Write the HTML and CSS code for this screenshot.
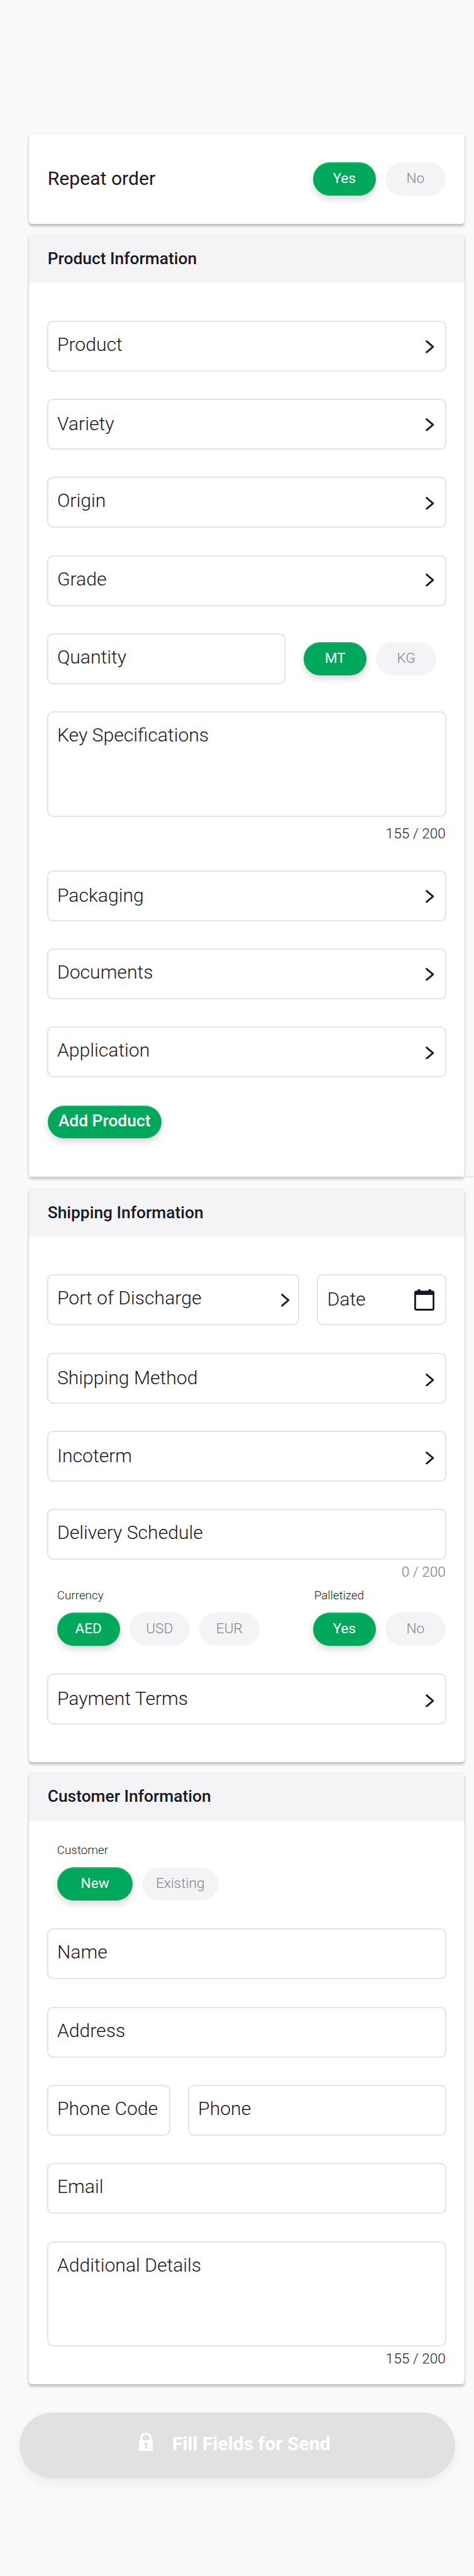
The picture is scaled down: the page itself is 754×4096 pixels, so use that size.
FILE: index.html
```html
<!DOCTYPE html>
<html lang="en">
<head>
<meta charset="utf-8">
<title>Order form</title>
<link rel="stylesheet" href="styles.css">
</head>
<body>
<svg class="sprite" aria-hidden="true">
  <symbol id="chevron" viewBox="0 0 15 22"><path d="M1.7 1.7 L12.6 11 L1.7 20.3" fill="none" stroke="currentColor" stroke-width="3" stroke-linecap="round" stroke-linejoin="round"/></symbol>
  <symbol id="calendar" viewBox="0 0 34 36"><path fill="currentColor" fill-rule="evenodd" d="M5.5 2.3 V2 a2 2 0 0 1 2-2 h1.2 a2 2 0 0 1 2 2 v.3 H23.6 V2 a2 2 0 0 1 2-2 h1.2 a2 2 0 0 1 2 2 v.3 H30.5 A3.5 3.5 0 0 1 34 5.8 V32.5 A3.5 3.5 0 0 1 30.5 36 H3.5 A3.5 3.5 0 0 1 0 32.5 V5.8 A3.5 3.5 0 0 1 3.5 2.3 Z M3 9.6 V32 a1 1 0 0 0 1 1 H30 a1 1 0 0 0 1-1 V9.6 Z"/></symbol>
  <symbol id="lock" viewBox="0 0 24 31"><path d="M4 14 V9.6 a8 8 0 0 1 16 0 V14" fill="none" stroke="currentColor" stroke-width="3.4"/><path fill="currentColor" fill-rule="evenodd" d="M2 13 H22 a2 2 0 0 1 2 2 V29 a2 2 0 0 1-2 2 H2 a2 2 0 0 1-2-2 V15 a2 2 0 0 1 2-2 Z M10.4 21.6 V27 h3.2 V21.6 a2.8 2.8 0 1 0-3.2 0 Z"/></symbol>
</svg>
<main class="page">
  <section class="card card--repeat">
    <span class="repeat-label">Repeat order</span>
    <div class="pills"><button class="pill pill--on">Yes</button><button class="pill">No</button></div>
  </section>

  <section class="card">
    <h2 class="card-head">Product Information</h2>
    <div class="stack stack--product">
      <div class="field">Product<svg class="chev"><use href="#chevron"/></svg></div>
      <div class="field field--low">Variety<svg class="chev"><use href="#chevron"/></svg></div>
      <div class="field">Origin<svg class="chev"><use href="#chevron"/></svg></div>
      <div class="field">Grade<svg class="chev chev--high"><use href="#chevron"/></svg></div>
      <div class="row row--quantity">
        <div class="field">Quantity</div>
        <div class="pills"><button class="pill pill--on">MT</button><button class="pill">KG</button></div>
      </div>
      <div>
        <div class="field field--area">Key Specifications</div>
        <div class="counter counter--spaced">155 / 200</div>
      </div>
      <div class="field field--low">Packaging<svg class="chev"><use href="#chevron"/></svg></div>
      <div class="field">Documents<svg class="chev"><use href="#chevron"/></svg></div>
      <div class="field">Application<svg class="chev"><use href="#chevron"/></svg></div>
      <button class="add">Add Product</button>
    </div>
  </section>
  <div class="divider"></div>

  <section class="card card--shipping">
    <h2 class="card-head">Shipping Information</h2>
    <div class="stack stack--shipping">
      <div class="row row--port">
        <div class="field">Port of Discharge<svg class="chev"><use href="#chevron"/></svg></div>
        <div class="field field--low">Date<svg class="cal"><use href="#calendar"/></svg></div>
      </div>
      <div class="field field--low">Shipping Method<svg class="chev chev--low"><use href="#chevron"/></svg></div>
      <div class="field field--low">Incoterm<svg class="chev chev--low"><use href="#chevron"/></svg></div>
      <div>
        <div class="field">Delivery Schedule</div>
        <div class="counter counter--muted">0 / 200</div>
        <div class="options">
          <div>
            <div class="label">Currency</div>
            <div class="pills"><button class="pill pill--on">AED</button><button class="pill">USD</button><button class="pill">EUR</button></div>
          </div>
          <div>
            <div class="label label--inset">Palletized</div>
            <div class="pills"><button class="pill pill--on">Yes</button><button class="pill">No</button></div>
          </div>
        </div>
      </div>
      <div class="field field--low field--after-pills">Payment Terms<svg class="chev chev--low"><use href="#chevron"/></svg></div>
    </div>
  </section>

  <section class="card card--customer">
    <h2 class="card-head">Customer Information</h2>
    <div class="stack stack--customer">
      <div class="customer-type">
        <div class="label">Customer</div>
        <div class="pills pills--wide"><button class="pill pill--on">New</button><button class="pill">Existing</button></div>
      </div>
      <div class="field field--after-pills">Name</div>
      <div class="field">Address</div>
      <div class="row row--phone">
        <div class="field">Phone Code</div>
        <div class="field">Phone</div>
      </div>
      <div class="field">Email</div>
      <div>
        <div class="field field--area">Additional Details</div>
        <div class="counter">155 / 200</div>
      </div>
    </div>
  </section>

  <button class="send"><svg class="lock"><use href="#lock"/></svg><span class="send-text">Fill Fields for Send</span></button>
</main>
</body>
</html>
```
FILE: styles.css
```css
/* 1rem = 10 design units */
html { font-size: 9.4205px; }
* { box-sizing: border-box; }
body {
  margin: 0;
  background: #f9f9f9;
  color: #181824;
  font-family: Roboto, "Liberation Sans", sans-serif;
  font-weight: 300;
  overflow: hidden;
}
button { font-family: inherit; border: 0; padding: 0; margin: 0; display: block; }
.sprite { position: absolute; width: 0; height: 0; }
.page { width: 80rem; height: 434.8rem; margin-left: .4px; padding-top: 22.6rem; }

.card {
  width: 73.6rem;
  margin: 0 0 2rem 4.8rem;
  background: #fff;
  border-radius: .5rem;
  box-shadow: 0 .4rem .4rem rgba(0,0,0,.2), 0 0 .4rem rgba(0,0,0,.13);
}
.card--repeat {
  height: 15.2rem;
  padding: 4.8rem 3.2rem 0;
  display: flex;
  justify-content: space-between;
}
.repeat-label { font-size: 3.2rem; font-weight: 400; line-height: 5.45rem; }
.card-head {
  margin: 0;
  height: 8rem;
  padding-left: 3.2rem;
  background: #f4f4f7;
  border-radius: .5rem .5rem 0 0;
  font-size: 2.8rem;
  font-weight: 500;
  line-height: 7.7rem;
}
.divider { width: 75.2rem; height: .2rem; margin: -2.1rem 0 2.1rem 4.8rem; background: #e8e8ec; }

.stack { display: flex; flex-direction: column; gap: 4.6rem; padding: 6.3rem 3.1rem 0; }
.stack--product { height: 150.8rem; }
.stack--shipping { height: 88.6rem; }
.stack--customer { height: 95rem; padding-top: 3.72rem; }

.field {
  height: 8.6rem;
  flex-shrink: 0;
  display: flex;
  justify-content: space-between;
  align-items: flex-start;
  padding: 0 1.8rem 0 1.5rem;
  border: 2px solid #e4e4e4;
  border-radius: 1rem;
  font-size: 3.2rem;
  line-height: 7.6rem;
  white-space: nowrap;
}
.field--low { line-height: 8rem; }
.field--area { height: 17.8rem; }
.field--after-pills { margin-top: .1rem; }
.chev { width: 1.5rem; height: 2.2rem; margin-top: 3.1rem; }
.chev--high { margin-top: 2.9rem; }
.chev--low { margin-top: 3.3rem; }
.cal { width: 3.4rem; height: 3.6rem; margin-top: 2.3rem; }

.row { display: flex; }
.row--quantity .field { width: 40.2rem; }
.row--quantity .pills { margin: 1.5rem 0 0 3.15rem; }
.row--port .field:first-child { width: 42.6rem; padding-right: 1.4rem; }
.row--port .field:last-child { width: 21.8rem; margin-left: 3rem; padding-right: 1.8rem; }
.row--phone .field:first-child { width: 20.8rem; }
.row--phone .field:last-child { width: 43.6rem; margin-left: 3rem; }

.counter { height: 3.48rem; padding: .68rem .1rem 0 0; text-align: right; font-size: 2.4rem; line-height: 2.8rem; }
.counter--spaced { height: 4.4rem; padding-top: 1.48rem; }
.counter--muted { color: #77777c; }

.options { display: flex; justify-content: space-between; margin-top: 1.34rem; padding: 0 .1rem 0 1.7rem; }
.customer-type { padding-left: 1.7rem; }
.label { height: 2.4rem; margin-bottom: 1.68rem; font-size: 2rem; line-height: 2.4rem; }
.label--inset { padding-left: .2rem; }

.pills { display: flex; gap: 1.6rem; }
.pill {
  width: 10.2rem;
  height: 5.6rem;
  border-radius: 2.8rem;
  background: #f4f4f7;
  color: #85858a;
  font-size: 2.4rem;
  font-weight: 300;
  line-height: 5.6rem;
}
.pill--on, .add {
  background: #00a85c;
  color: #fff;
  box-shadow: inset 0 .2rem 0 rgba(255,255,255,.13), 0 .6rem 1.2rem rgba(0,0,0,.15);
}
.pill--on { width: 10.6rem; font-weight: 400; }
.pills--wide .pill { width: 12.8rem; }
.add {
  width: 19.2rem;
  height: 5.6rem;
  margin: .1rem 0 0 .1rem;
  padding-bottom: .3rem;
  border-radius: 2.8rem;
  font-size: 2.8rem;
  font-weight: 500;
  line-height: 5.3rem;
}

.send {
  width: 73.6rem;
  height: 11.2rem;
  margin: 4.8rem 0 0 3.2rem;
  padding-left: 20.2rem;
  display: flex;
  align-items: flex-start;
  border-radius: 5.6rem;
  background: #e1e1e1;
  color: #fff;
  box-shadow: 0 .8rem 1.6rem rgba(0,0,0,.05);
}
.lock { width: 2.4rem; height: 3.1rem; margin-top: 3.4rem; }
.send-text { margin-left: 3.25rem; font-size: 3.2rem; font-weight: 700; line-height: 10.6rem; }
```
